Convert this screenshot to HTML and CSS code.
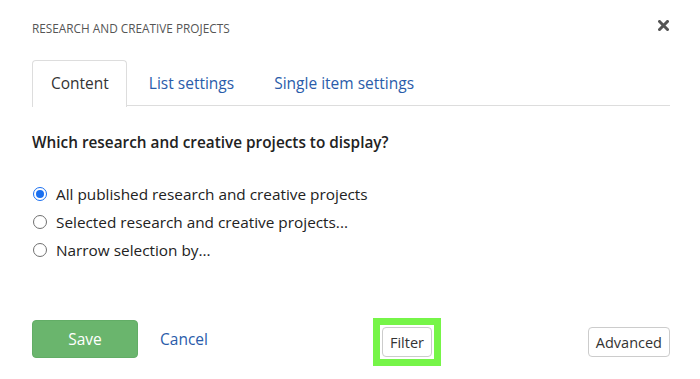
FILE: index.html
```html
<!DOCTYPE html>
<html>
<head>
<meta charset="utf-8">
<link rel="stylesheet" href="styles.css">
</head>
<body>
<div class="dialog">
  <div class="header">
    <div class="title">RESEARCH AND CREATIVE PROJECTS</div>
    <svg class="close" width="11" height="11" viewBox="0 0 11 11"><path d="M1.5 1.5 L9.5 9.5 M9.5 1.5 L1.5 9.5" stroke="#555" stroke-width="3" stroke-linecap="square"/></svg>
  </div>
  <div class="tabs">
    <div class="tab active">Content</div>
    <div class="tab">List settings</div>
    <div class="tab">Single item settings</div>
  </div>
  <div class="question">Which research and creative projects to display?</div>
  <div class="options">
    <label class="option"><span class="radio checked"></span>All published research and creative projects</label>
    <label class="option"><span class="radio"></span>Selected research and creative projects...</label>
    <label class="option"><span class="radio"></span>Narrow selection by...</label>
  </div>
  <div class="footer">
    <button class="save">Save</button>
    <a class="cancel">Cancel</a>
    <div class="highlight"><button class="btn">Filter</button></div>
    <button class="btn advanced">Advanced</button>
  </div>
</div>
</body>
</html>
```

FILE: styles.css
```css
html, body {
  margin: 0;
  padding: 0;
  background: #fff;
  font-family: "Open Sans", "Liberation Sans", sans-serif;
}
.dialog {
  width: 638px;
  padding: 0 30px 0 32px;
}
.header {
  display: flex;
  justify-content: space-between;
  align-items: center;
  padding-top: 19px;
  height: 17px;
}
.title {
  font-size: 11.8px;
  color: #555;
}
.close {
  margin-right: 1px;
  margin-top: -4px;
}
.tabs {
  display: flex;
  margin-top: 24px;
  border-bottom: 1px solid #ddd;
  height: 45px;
}
.tab {
  font-size: 15.5px;
  color: #2a5caa;
  padding: 0 18px;
  line-height: 45px;
  border: 1px solid transparent;
  border-bottom: none;
  border-radius: 4px 4px 0 0;
  margin-right: 2px;
}
.tab.active {
  color: #333;
  border-color: #ddd;
  background: #fff;
  margin-bottom: -1px;
  height: 46px;
  padding: 0 17px 0 18px;
  margin-right: 3px;
}
.question {
  margin-top: 26px;
  font-size: 15.35px;
  font-weight: 600;
  color: #222;
}
.options {
  margin-top: 28px;
  display: flex;
  flex-direction: column;
}
.option {
  display: flex;
  align-items: center;
  font-size: 15.35px;
  color: #222;
  height: 28px;
}
.radio {
  width: 12px;
  height: 12px;
  border: 1px solid #707070;
  border-radius: 50%;
  margin: 0 9px 0 1px;
  box-sizing: content-box;
  position: relative;
}
.radio.checked {
  border: 1px solid #1a6ff0;
  background: #fff;
}
.radio.checked::after {
  content: "";
  position: absolute;
  left: 2px;
  top: 2px;
  width: 8px;
  height: 8px;
  border-radius: 50%;
  background: #1a6ff0;
}
.footer {
  margin-top: 48px;
  display: flex;
  align-items: center;
}
.save {
  width: 106px;
  height: 38px;
  background: #6ab56d;
  border: 1px solid #62ad66;
  border-radius: 4px;
  color: #fff;
  font-family: inherit;
  font-size: 15.5px;
  padding: 0;
}
.cancel {
  margin-left: 22px;
  color: #2a5caa;
  font-size: 15.5px;
}
.highlight {
  margin-left: 165px;
  border: 7px solid #76f548;
  padding: 2px;
  margin-top: 6px;
}
.btn {
  font-family: inherit;
  font-size: 14.5px;
  color: #333;
  background: #fff;
  border: 1px solid #ccc;
  border-radius: 4px;
  height: 30px;
  padding: 0 7px;
  display: block;
}
.advanced {
  margin-left: auto;
  margin-top: 6px;
}
```
